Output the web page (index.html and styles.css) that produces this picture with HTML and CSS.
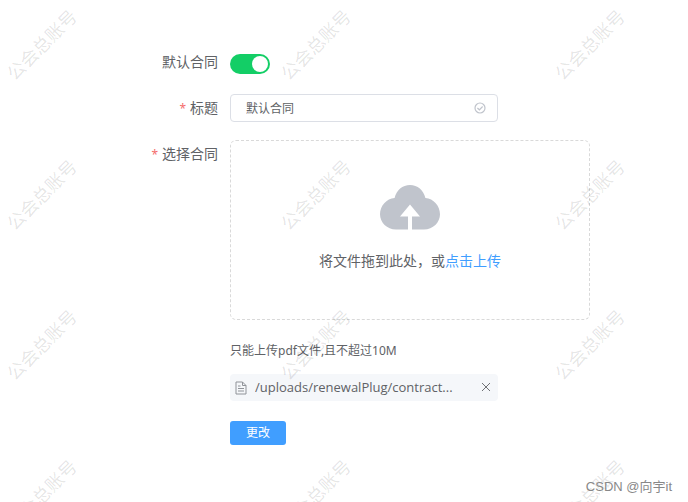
FILE: index.html
```html
<!DOCTYPE html>
<html lang="zh-CN">
  <head>
    <meta charset="UTF-8" />
    <meta name="viewport" content="width=device-width, initial-scale=1.0" />
    <title>默认合同</title>
    <link rel="stylesheet" href="styles.css">
  </head>
  <body>
    <form class="form">
      <div class="form-item">
        <label class="form-label" for="isDefault">默认合同</label>
        <div class="form-content switch-wrap">
          <input class="switch" type="checkbox" role="switch" id="isDefault" checked />
        </div>
      </div>
      <div class="form-item">
        <label class="form-label required" for="title">标题</label>
        <div class="form-content">
          <div class="input-box">
            <input class="input" type="text" id="title" value="默认合同" />
            <svg class="input-icon" viewBox="0 0 12 12" aria-hidden="true">
              <circle cx="6" cy="6" r="5" />
              <path d="M3.400 6l2 1.800 3.200-3.300" />
            </svg>
          </div>
        </div>
      </div>
      <div class="form-item">
        <label class="form-label required" for="file">选择合同</label>
        <div class="form-content">
          <label class="dragger">
            <input class="file-input" type="file" id="file" accept=".pdf" />
            <svg class="cloud" viewBox="0 0 60 45" aria-hidden="true">
              <path d="M16 44.500C7 44.500 0 37.500 0 29.300C0 20.500 6.500 13.500 14.600 12.900C16.300 5.300 22.500 0 30 0C37.500 0 43.700 5.300 45.400 12.900C53.500 13.500 60 20.500 60 29.300C60 37.500 53 44.500 44 44.500H32V31.500H40L30 19.500L20 31.500H28V44.500Z" />
            </svg>
            <span class="dragger-text">将文件拖到此处，或<em>点击上传</em></span>
          </label>
          <div class="tip">只能上传pdf文件,且不超过10M</div>
          <div class="file">
            <svg class="file-icon" viewBox="0 0 12 14" aria-hidden="true">
              <path d="M1 1h6.500L11 4.500V13H1zM7.500 1v3.500H11M3 5h2.500M3 7.500h6M3 10h6" />
            </svg>
            <a class="file-name" href="#">/uploads/renewalPlug/contract...</a>
            <button class="file-close" type="button" aria-label="删除">
              <svg viewBox="0 0 10 10" aria-hidden="true">
                <path d="M1 1l8 8M9 1L1 9" />
              </svg>
            </button>
          </div>
          <button class="btn" type="button">更改</button>
        </div>
      </div>
    </form>

    <div class="watermark" aria-hidden="true">
      <div class="mark"><span>公会总账号</span></div>
      <div class="mark"><span>公会总账号</span></div>
      <div class="mark"><span>公会总账号</span></div>
      <div class="mark"><span>公会总账号</span></div>
      <div class="mark"><span>公会总账号</span></div>
      <div class="mark"><span>公会总账号</span></div>
      <div class="mark"><span>公会总账号</span></div>
      <div class="mark"><span>公会总账号</span></div>
      <div class="mark"><span>公会总账号</span></div>
      <div class="mark"><span>公会总账号</span></div>
      <div class="mark"><span>公会总账号</span></div>
      <div class="mark"><span>公会总账号</span></div>
    </div>
    <div class="credit">CSDN @向宇it</div>
  </body>
</html>
```

FILE: styles.css
```css
* {
  margin: 0;
  padding: 0;
  box-sizing: border-box;
}
body {
  position: relative;
  min-height: 100vh;
  background: #fff;
  color: #606266;
  font-family: "Noto Sans", "Noto Sans CJK SC", sans-serif;
  font-size: 14px;
}
.form {
  padding: 48px 16px 16px 0;
}
.form-item {
  display: grid;
  grid-template-columns: 230px minmax(0, 360px);
  margin-bottom: 18px;
}
.form-label {
  padding-right: 12px;
  line-height: 28px;
  text-align: right;
}
.required::before {
  content: "*";
  margin-right: 4px;
  color: #f56c6c;
  font-size: 12px;
  line-height: 1;
}

/* switch */
.switch-wrap {
  display: flex;
  height: 28px;
  padding-top: 6px;
}
.switch {
  appearance: none;
  display: flex;
  align-items: center;
  width: 40px;
  height: 20px;
  padding: 0 2px;
  border-radius: 10px;
  background: #dcdfe6;
  cursor: pointer;
}
.switch::before {
  content: "";
  width: 16px;
  height: 16px;
  border-radius: 50%;
  background: #fff;
}
.switch:checked {
  justify-content: flex-end;
  background: #13ce66;
}

/* input */
.input-box {
  display: flex;
  align-items: center;
  max-width: 268px;
  height: 28px;
  padding: 0 11px 0 15px;
  border: 1px solid #dcdfe6;
  border-radius: 4px;
}
.input {
  flex: 1;
  min-width: 0;
  border: 0;
  outline: 0;
  background: none;
  color: #606266;
  font: inherit;
  font-size: 12px;
}
.input-icon {
  width: 12px;
  height: 12px;
  fill: none;
  stroke: #c0c4cc;
  stroke-width: 1.2;
}

/* upload */
.dragger {
  display: flex;
  flex-direction: column;
  align-items: center;
  height: 180px;
  padding-top: 44px;
  border: 1px dashed #d9d9d9;
  border-radius: 6px;
  cursor: pointer;
}
.file-input {
  position: absolute;
  width: 1px;
  height: 1px;
  opacity: 0;
}
.cloud {
  width: 60px;
  height: 45px;
  fill: #c0c4cc;
}
.dragger-text {
  margin-top: 17px;
  line-height: 28px;
}
.dragger-text em {
  color: #409eff;
  font-style: normal;
}
.tip {
  margin-top: 17px;
  font-size: 12px;
  line-height: 28px;
}
.file {
  display: flex;
  align-items: center;
  max-width: 268px;
  height: 27px;
  margin-top: 9px;
  padding: 0 7px 0 5px;
  border-radius: 4px;
  background: #f5f7fa;
}
.file-icon {
  width: 12px;
  height: 14px;
  margin-right: 8px;
  fill: none;
  stroke: #909399;
}
.file-name {
  flex: 1;
  min-width: 0;
  overflow: hidden;
  color: #606266;
  font-family: "Open Sans", "Noto Sans", sans-serif;
  font-size: 13px;
  line-height: 27px;
  text-decoration: none;
  text-overflow: ellipsis;
  white-space: nowrap;
}
.file-close {
  display: flex;
  padding-bottom: 2px;
  border: 0;
  background: none;
  cursor: pointer;
}
.file-close svg {
  width: 10px;
  height: 10px;
  stroke: #707276;
}
.btn {
  display: block;
  height: 24px;
  margin-top: 20px;
  padding: 0 16px;
  border: 0;
  border-radius: 3px;
  background: #409eff;
  color: #fff;
  font: inherit;
  font-size: 12px;
  line-height: 24px;
  cursor: pointer;
}

/* watermark */
.watermark {
  position: absolute;
  inset: 0;
  display: grid;
  grid-template-columns: repeat(3, 274px);
  grid-auto-rows: 150px;
  overflow: hidden;
  pointer-events: none;
}
.mark {
  display: flex;
  align-items: center;
  justify-content: center;
  width: 82px;
  height: 88px;
  color: rgba(0, 0, 0, 0.11);
  font-size: 18px;
}
.mark span {
  flex: none;
  transform: rotate(-45deg);
}
.credit {
  position: absolute;
  right: 16px;
  bottom: 5px;
  color: #888;
  font-family: "Liberation Sans", "Noto Sans CJK SC", sans-serif;
  font-size: 13px;
  line-height: 20px;
}
```
